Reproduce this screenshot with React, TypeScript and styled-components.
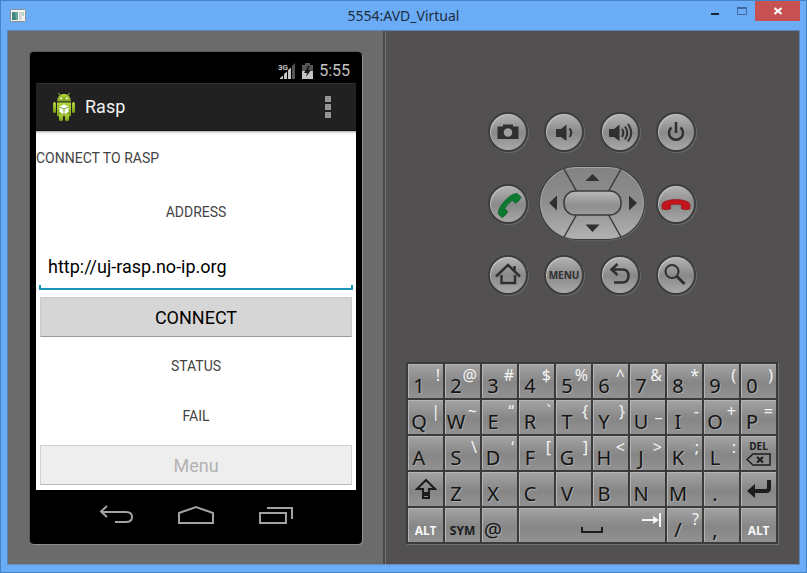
import React from "react";
import styled, { createGlobalStyle, css } from "styled-components";

const GlobalStyle = createGlobalStyle`
  * { box-sizing: border-box; }
  body { margin: 0; background: #6aacf6; }
  button, input { font: inherit; color: inherit; margin: 0; padding: 0; border: 0; }
  svg { display: block; }
`;

const Window = styled.div`
  display: flex;
  flex-direction: column;
  min-height: 100vh;
  padding: 0 6px 7px;
  background: #6aacf6;
  border: 1px solid #4683c6;
`;

const TitleBar = styled.header`
  display: grid;
  grid-template-columns: 1fr auto 1fr;
  height: 29px;
  align-items: center;
  color: #1d2c40;
  font-family: "Noto Sans", sans-serif;
`;

const Title = styled.h1`
  margin: 0;
  font-size: 14px;
  line-height: 20px;
  font-weight: 400;
`;

const AppIcon = styled.svg`
  margin-left: 3px;
`;

const WindowControls = styled.div`
  display: flex;
  justify-self: end;
  align-self: start;
`;

const WindowButton = styled.button<{ $close?: boolean }>`
  display: grid;
  place-items: center;
  width: ${(p) => (p.$close ? 45 : 27)}px;
  height: 20px;
  background: ${(p) => (p.$close ? "#c75050" : "transparent")};
`;

const Body = styled.main`
  display: grid;
  grid-template-columns: 375fr 416fr;
  flex: 1;
  border: 1px solid #5684bb;
  border-bottom-color: #6e8db3;
  background: #525051;
`;

const PhonePane = styled.section`
  padding: 21px 21px 20px 22px;
  background: #6b6b6b;
`;

const ControlsPane = styled.section`
  display: flex;
  flex-direction: column;
  justify-content: space-between;
  align-items: center;
  padding: 81px 10px 20px 10px;
  border-left: 2px solid #4b4a4a;
  box-shadow: inset 1px 0 #747373;
`;

const Phone = styled.div`
  display: flex;
  flex-direction: column;
  height: 100%;
  padding: 0 6px;
  border-radius: 4px;
  background: #000;
  box-shadow: 1px 1px #8d8d8d, -1px -1px #5b5b5b;
  font-family: Roboto, sans-serif;
`;

const StatusBar = styled.div`
  display: flex;
  justify-content: flex-end;
  align-items: center;
  gap: 6px;
  height: 31px;
  padding: 6px 6px 0 0;
  color: #c4c4c4;
  font-size: 16px;
  line-height: 20px;
`;

const ActionBar = styled.div`
  display: flex;
  align-items: center;
  height: 48px;
  padding: 0 16px;
  gap: 9px;
  background: #212121;
  border-top: 1px solid #2e2e2e;
  border-bottom: 1px solid #111;
  color: #f3f3f3;
`;

const AppName = styled.h2`
  flex: 1;
  margin: 0;
  font-size: 18px;
  line-height: 24px;
  font-weight: 400;
`;

const OverflowButton = styled.button`
  display: grid;
  place-items: center;
  width: 24px;
  height: 40px;
  background: transparent;
`;

const Screen = styled.form`
  flex: 1;
  display: flex;
  flex-direction: column;
  background: #fff;
  box-shadow: inset 0 3px 3px -2px #a5a0a0;
`;

const labelText = css`
  display: block;
  margin: 0;
  font-size: 14px;
  font-weight: 400;
  color: #444;
`;

const Heading = styled.p`
  ${labelText}
  line-height: 54px;
`;

const FieldLabel = styled.label`
  ${labelText}
  line-height: 54px;
  text-align: center;
`;

const StatusLine = styled.p`
  ${labelText}
  line-height: 50px;
  text-align: center;
`;

const FieldBox = styled.div`
  display: flex;
  flex-direction: column;
  justify-content: flex-end;
  height: 51px;
  margin: 0 3px 7px;
  background: linear-gradient(#1a95ba, #1a95ba) left bottom / 2px 3px no-repeat,
    linear-gradient(#1a95ba, #1a95ba) right bottom / 2px 3px no-repeat;
  border-bottom: 2px solid #1a95ba;
`;

const AddressInput = styled.input`
  width: 100%;
  height: 44px;
  padding: 0 9px;
  background: transparent;
  color: #000;
  font-size: 18px;
  outline: none;
`;

const PhoneButton = styled.button`
  height: 40px;
  margin: 0 4px 4px;
  background: #d6d6d6;
  border: 1px solid #cbcbcb;
  border-bottom: 1px solid #999;
  border-radius: 1px;
  color: #000;
  font-size: 18px;

  &:disabled {
    background: #eee;
    border-color: #d2d2d2;
    border-bottom-color: #b9b9b9;
    color: #b2b2b2;
    margin: 4px 4px 5px;
  }
`;

const NavBar = styled.nav`
  display: flex;
  justify-content: center;
  height: 54px;
  padding-bottom: 4px;
`;

const NavButton = styled.button`
  display: grid;
  place-items: center;
  width: 80px;
  background: transparent;
`;

const ButtonPad = styled.div`
  display: flex;
  flex-direction: column;
  gap: 14px;
`;

const PadRow = styled.div`
  display: flex;
  justify-content: space-between;
  align-items: center;
  width: 208px;
`;

const RoundButton = styled.button`
  display: grid;
  place-items: center;
  width: 40px;
  height: 40px;
  border: 2px solid #3f3e3e;
  border-radius: 50%;
  background: linear-gradient(#b4b4b4, #898989 52%, #a9a9a9);
  box-shadow: 1px 1px #6c6b6b, inset 1px 1px #c6c6c6;
  color: #303030;
  font: 700 10px/12px "Noto Sans", sans-serif;

  svg {
    margin: -2px;
  }
`;

const DPad = styled.div`
  position: relative;
  display: grid;
  grid-template: 25px 25px 25px / 25px 57px 25px;
  width: 107px;
`;

const DPadFace = styled.svg`
  position: absolute;
  inset: 0;
  pointer-events: none;
`;

const DPadButton = styled.button<{ $area: string }>`
  grid-area: ${(p) => p.$area};
  background: transparent;
`;

const Keyboard = styled.div`
  display: grid;
  grid-template-columns: repeat(10, 35px);
  grid-auto-rows: 34px;
  gap: 2px;
  padding: 2px;
  background: #3c3b3b;
  box-shadow: 1px 1px #737272;
`;

const Key = styled.button<{ $span?: number }>`
  display: grid;
  grid-template: 34px / 100%;
  grid-column: span ${(p) => p.$span || 1};
  background: linear-gradient(#a4a4a4, #868686 55%, #929292);
  box-shadow: inset 1px 1px #b5b5b5;
  font-family: "Noto Sans", sans-serif;
`;

const MainGlyph = styled.span`
  grid-area: 1 / 1;
  align-self: end;
  width: 22px;
  text-align: center;
  font-size: 20px;
  line-height: 24px;
  color: #141414;
  text-shadow: 1px 1px #a9a9a9;
`;

const AltGlyph = styled.span`
  grid-area: 1 / 1;
  justify-self: end;
  padding-right: 3px;
  font-size: 16px;
  line-height: 22px;
  color: #f4f4f4;
`;

const WordKey = styled(Key)<{ $light?: boolean }>`
  display: block;
  padding-top: 12px;
  font-size: 12px;
  line-height: 16px;
  font-weight: 700;
  color: ${(p) => (p.$light ? "#f6f6f6" : "#1c1c1c")};
`;

const IconKey = styled(Key)`
  place-items: center;
`;

const DeleteKey = styled.button`
  display: flex;
  flex-direction: column;
  align-items: center;
  justify-content: center;
  gap: 1px;
  background: linear-gradient(#a4a4a4, #868686 55%, #929292);
  box-shadow: inset 1px 1px #b5b5b5;
  color: #1c1c1c;
  font: 700 10px/11px "Noto Sans", sans-serif;
`;

const SpaceKey = styled(Key)`
  grid-template: 20px / 1fr auto 1fr;
  padding: 5px 4px 9px;
`;

const SpaceMark = styled.svg`
  grid-area: 1 / 2;
  align-self: end;
`;

const TabMark = styled.svg`
  grid-area: 1 / 3;
  justify-self: end;
  align-self: start;
`;

const Icon = ({ children }: { children: React.ReactNode }) => (
  <svg width="40" height="40" viewBox="0 0 40 40" fill="none" stroke="#303030" strokeWidth="2">
    {children}
  </svg>
);

const HANDSET =
  "M6 25V20C9 14 31 14 34 20V25Q30 26.500 25.500 25V20.800Q20 19.500 14.500 20.800V25Q10 26.500 6 25Z";

const CharKeys = ({ keys }: { keys: string[] }) => (
  <>
    {keys.map((k) => (
      <Key key={k} type="button">
        <MainGlyph>{k[0]}</MainGlyph>
        {k[1] && <AltGlyph>{k[1]}</AltGlyph>}
      </Key>
    ))}
  </>
);

const AndroidLogo = () => (
  <svg width="24" height="30" viewBox="0 0 24 30">
    <defs>
      <linearGradient id="robot" x2="0" y2="1">
        <stop stopColor="#b4d840" />
        <stop offset="1" stopColor="#759c18" />
      </linearGradient>
    </defs>
    <g fill="url(#robot)">
      <path d="M5 9.5C5.300 4.500 8 2 12 2S18.700 4.500 19 9.500Z" />
      <path d="M5 10.500H19V23Q19 24.500 17.500 24.500H6.500Q5 24.500 5 23Z" />
      <rect x="1" y="10" width="3" height="11" rx="1.500" />
      <rect x="20" y="10" width="3" height="11" rx="1.500" />
      <rect x="7" y="22" width="4" height="7" rx="1.500" />
      <rect x="13" y="22" width="4" height="7" rx="1.500" />
    </g>
    <path d="M8 3.500L6.500 1M16 3.500L17.500 1" stroke="#9cc030" />
    <circle cx="9" cy="6.500" r="1" fill="#fff" />
    <circle cx="15" cy="6.500" r="1" fill="#fff" />
    <path d="M12 12.500L16.500 14.500V20L12 22.500L7.500 20V14.500Z" fill="#fff" />
    <path d="M7.500 15L12 17L16.500 15M12 17V22" stroke="#7ba31d" fill="none" />
  </svg>
);

export default function App() {
  return (
    <>
      <GlobalStyle />
      <Window>
        <TitleBar>
          <AppIcon width="16" height="14" viewBox="0 0 16 14">
            <rect x="0.500" y="0.500" width="15" height="12" rx="1" fill="#f3f3f3" stroke="#8a8f96" />
            <rect x="2" y="3" width="6" height="8" fill="#43857f" />
            <path d="M5 3H8V11H6Z" fill="#67a796" />
            <rect x="9" y="3" width="3" height="8" fill="#d4d7d7" />
            <rect x="12" y="3" width="2" height="4" fill="#b4d8bf" />
          </AppIcon>
          <Title>5554:AVD_Virtual</Title>
          <WindowControls>
            <WindowButton type="button" aria-label="Minimize">
              <svg width="10" height="10" viewBox="0 0 10 10">
                <rect x="1" y="7" width="8" height="2" fill="#16263a" />
              </svg>
            </WindowButton>
            <WindowButton type="button" aria-label="Maximize">
              <svg width="10" height="10" viewBox="0 0 10 10" fill="none" stroke="#43699c">
                <path d="M0.500 1V8.500H9.500V1" />
                <path d="M0 2H10" strokeWidth="2" />
              </svg>
            </WindowButton>
            <WindowButton $close type="button" aria-label="Close">
              <svg width="8" height="8" viewBox="0 0 8 8">
                <path d="M0.500 1L7.500 7M7.500 1L0.500 7" stroke="#fff" strokeWidth="2" />
              </svg>
            </WindowButton>
          </WindowControls>
        </TitleBar>

        <Body>
          <PhonePane>
            <Phone>
              <StatusBar>
                <svg width="18" height="18" viewBox="0 0 18 18" fill="#c4c4c4">
                  <path d="M17 1V17H14V4Z" fill="#555" />
                  <path d="M2 17V16L5 13.500V17ZM6 17V12L9 9.500V17ZM10 17V8L13 5.500V17Z" />
                  <text x="0" y="8" fontSize="8" fontWeight="700">3G</text>
                </svg>
                <svg width="11" height="18" viewBox="0 0 11 18">
                  <path d="M3 1H8V3H11V17H0V3H3Z" fill="#555" />
                  <path d="M0 9H11V17H0Z" fill="#c4c4c4" />
                  <path d="M6 4L2 11H5L4 15L9 8H6L8 4Z" fill="#181818" />
                </svg>
                <span>5:55</span>
              </StatusBar>
              <ActionBar>
                <AndroidLogo />
                <AppName>Rasp</AppName>
                <OverflowButton type="button" aria-label="More options">
                  <svg width="6" height="22" viewBox="0 0 6 22" fill="#969696">
                    <path d="M0 0H6V6H0ZM0 8H6V14H0ZM0 16H6V22H0Z" />
                  </svg>
                </OverflowButton>
              </ActionBar>
              <Screen onSubmit={(e) => e.preventDefault()}>
                <Heading>CONNECT TO RASP</Heading>
                <FieldLabel htmlFor="address">ADDRESS</FieldLabel>
                <FieldBox>
                  <AddressInput id="address" type="text" defaultValue="http://uj-rasp.no-ip.org" />
                </FieldBox>
                <PhoneButton type="submit">CONNECT</PhoneButton>
                <StatusLine>STATUS</StatusLine>
                <StatusLine>FAIL</StatusLine>
                <PhoneButton type="button" disabled>Menu</PhoneButton>
              </Screen>
              <NavBar>
                <NavButton type="button" aria-label="Back">
                  <svg width="36" height="20" viewBox="0 0 36 20" fill="none" stroke="#a2a2a2" strokeWidth="2">
                    <path d="M9 1L3 6.500L9 12M3 7H28Q34 7 34 12T28 17H17" />
                  </svg>
                </NavButton>
                <NavButton type="button" aria-label="Home">
                  <svg width="38" height="20" viewBox="0 0 38 20" fill="none" stroke="#a2a2a2" strokeWidth="2">
                    <path d="M2 18V8L19 2L36 8V18Z" />
                  </svg>
                </NavButton>
                <NavButton type="button" aria-label="Recent apps">
                  <svg width="36" height="20" viewBox="0 0 36 20" fill="none" stroke="#a2a2a2" strokeWidth="2">
                    <path d="M2 8H28V18H2ZM9 3H34V14" />
                  </svg>
                </NavButton>
              </NavBar>
            </Phone>
          </PhonePane>

          <ControlsPane>
            <ButtonPad>
              <PadRow>
                <RoundButton type="button" aria-label="Camera">
                  <Icon>
                    <path d="M9.500 14.500H15V12.500H25V14.500H30.500V27H9.500Z" fill="#303030" stroke="none" />
                    <circle cx="20" cy="20.500" r="4.300" fill="#a0a0a0" stroke="none" />
                  </Icon>
                </RoundButton>
                <RoundButton type="button" aria-label="Volume down">
                  <Icon>
                    <path d="M12 17H17L22.500 12.500V29L17 25H12Z" fill="#303030" stroke="none" />
                    <path d="M25.500 16.500Q29 20.500 25.500 25" />
                  </Icon>
                </RoundButton>
                <RoundButton type="button" aria-label="Volume up">
                  <Icon>
                    <path d="M9 17H14L19.500 12.500V29L14 25H9Z" fill="#303030" stroke="none" />
                    <path d="M22 17Q24.500 20.500 22 25M25 14.500Q29.500 20.500 25 27.500M28 12Q34.500 20.500 28 29.500" />
                  </Icon>
                </RoundButton>
                <RoundButton type="button" aria-label="Power">
                  <Icon>
                    <path d="M15.500 15.500A7 7 0 1 0 24.500 15.500" strokeWidth="2.500" />
                    <path d="M20 10V21" strokeWidth="2.500" />
                  </Icon>
                </RoundButton>
              </PadRow>

              <PadRow>
                <RoundButton type="button" aria-label="Call">
                  <Icon>
                    <path d={HANDSET} transform="rotate(-47 20 20)" fill="#0b7a30" stroke="#07561f" strokeWidth="0.500" />
                  </Icon>
                </RoundButton>
                <DPad>
                  <DPadButton $area="1 / 2" type="button" aria-label="Up" />
                  <DPadButton $area="2 / 1" type="button" aria-label="Left" />
                  <DPadButton $area="2 / 2" type="button" aria-label="Select" />
                  <DPadButton $area="2 / 3" type="button" aria-label="Right" />
                  <DPadButton $area="3 / 2" type="button" aria-label="Down" />
                  <DPadFace width="107" height="75" viewBox="0 0 107 75">
                    <defs>
                      <linearGradient id="ring" x2="0" y2="1">
                        <stop stopColor="#838383" />
                        <stop offset="0.500" stopColor="#8e8e8e" />
                        <stop offset="1" stopColor="#b2b2b2" />
                      </linearGradient>
                      <linearGradient id="select" x2="0" y2="1">
                        <stop stopColor="#bababa" />
                        <stop offset="0.600" stopColor="#8e8e8e" />
                        <stop offset="1" stopColor="#9c9c9c" />
                      </linearGradient>
                    </defs>
                    <rect x="1.500" y="1.500" width="105" height="73" rx="36" fill="#6f6e6e" />
                    <rect x="0" y="0" width="106" height="74" rx="37" fill="#3c3b3b" />
                    <rect x="1.500" y="1.500" width="103" height="71" rx="35.500" fill="url(#ring)" stroke="#a9a9a9" />
                    <path d="M25 3L38 26M82 3L69 26M38 48L25 71M69 48L82 71" stroke="#3c3b3b" strokeWidth="1.500" />
                    <rect x="25" y="25" width="57" height="24" rx="11" fill="url(#select)" stroke="#3c3b3b" strokeWidth="1.500" />
                    <path
                      d="M46.500 15H60.500L53.500 8ZM46.500 58.500H60.500L53.500 66ZM10 37L18 29.500V44.500ZM98 37L90 29.500V44.500Z"
                      fill="#303030"
                    />
                  </DPadFace>
                </DPad>
                <RoundButton type="button" aria-label="End call">
                  <Icon>
                    <path d={HANDSET} fill="#c4141c" stroke="#7e0c10" strokeWidth="0.500" />
                  </Icon>
                </RoundButton>
              </PadRow>

              <PadRow>
                <RoundButton type="button" aria-label="Home">
                  <Icon>
                    <path d="M8 21.500L20 10L32 21.500M26.500 16V11M13.500 20V28H27V20" strokeWidth="2.500" />
                  </Icon>
                </RoundButton>
                <RoundButton type="button">MENU</RoundButton>
                <RoundButton type="button" aria-label="Back">
                  <Icon>
                    <path d="M17.500 9L11.500 14.500L17.500 20M12 14.500H22.500Q28.500 14.500 28.500 21T22 27.500H14" strokeWidth="2.500" />
                  </Icon>
                </RoundButton>
                <RoundButton type="button" aria-label="Search">
                  <Icon>
                    <circle cx="16" cy="16.500" r="6.500" />
                    <path d="M20.500 21L28.500 29" strokeWidth="3" />
                  </Icon>
                </RoundButton>
              </PadRow>
            </ButtonPad>

            <Keyboard>
              <CharKeys keys={["1!", "2@", "3#", "4$", "5%", "6^", "7&", "8*", "9(", "0)"]} />
              <CharKeys keys={["Q|", "W~", "E“", "R`", "T{", "Y}", "U_", "I-", "O+", "P="]} />
              <CharKeys keys={["A", "S\\", "D‘", "F[", "G]", "H<", "J>", "K;", "L:"]} />
              <DeleteKey type="button">
                DEL
                <svg width="25" height="13" viewBox="0 0 25 13" fill="none" stroke="#1c1c1c">
                  <path d="M7 1H24V12H7L1 6.500Z" strokeWidth="1.500" />
                  <path d="M11 4L17 9.500M17 4L11 9.500" strokeWidth="2" />
                </svg>
              </DeleteKey>
              <IconKey type="button" aria-label="Shift">
                <svg width="22" height="22" viewBox="0 0 22 22" fill="none" stroke="#1c1c1c" strokeWidth="2">
                  <path d="M11 2L20 11H14V15H8V11H2ZM8 17H14V20H8Z" />
                </svg>
              </IconKey>
              <CharKeys keys={["Z", "X", "C", "V", "B", "N", "M", "."]} />
              <IconKey type="button" aria-label="Enter">
                <svg width="26" height="18" viewBox="0 0 26 18">
                  <path d="M1 11L9 4V18Z" fill="#1c1c1c" />
                  <path d="M8 11H20Q23 11 23 8V0" fill="none" stroke="#1c1c1c" strokeWidth="4" />
                </svg>
              </IconKey>
              <WordKey $light type="button">ALT</WordKey>
              <WordKey type="button">SYM</WordKey>
              <CharKeys keys={["@"]} />
              <SpaceKey $span={4} type="button" aria-label="Space">
                <SpaceMark width="22" height="6" viewBox="0 0 22 6">
                  <path d="M1 0V5H21V0" fill="none" stroke="#1c1c1c" strokeWidth="2" />
                </SpaceMark>
                <TabMark width="19" height="14" viewBox="0 -3 19 14">
                  <path d="M0 4H13M18 -3V11" stroke="#f4f4f4" strokeWidth="2" />
                  <path d="M11 0L17 4L11 8Z" fill="#f4f4f4" />
                </TabMark>
              </SpaceKey>
              <CharKeys keys={["/?", ","]} />
              <WordKey $light type="button">ALT</WordKey>
            </Keyboard>
          </ControlsPane>
        </Body>
      </Window>
    </>
  );
}
